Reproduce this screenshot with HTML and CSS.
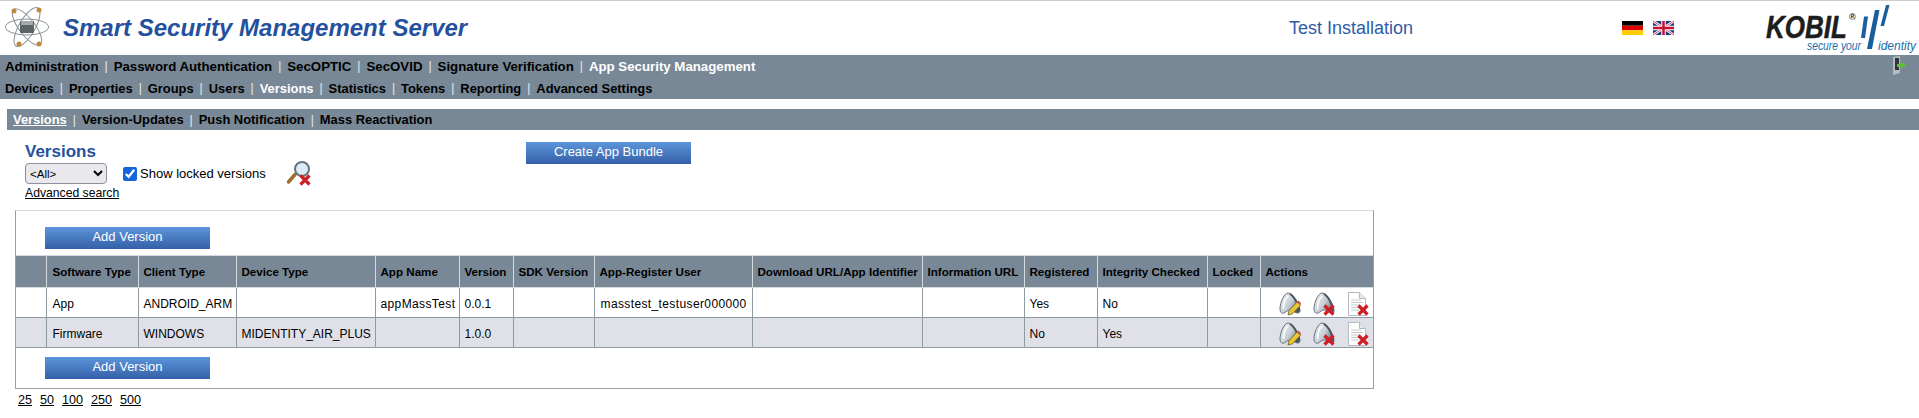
FILE: index.html
```html
<!DOCTYPE html>
<html lang="en">
<head>
    <meta charset="UTF-8">
    <meta name="viewport" content="width=device-width, initial-scale=1.0">
    <title>Smart Security Management Server</title>
    <link rel="stylesheet" href="styles.css">
</head>
<body>

    <svg class="defs" width="0" height="0">
        <defs>
            <linearGradient id="bell" x1="0" y1="0" x2="1" y2="0.6">
                <stop offset="0" stop-color="#f4f6f7"/>
                <stop offset="0.6" stop-color="#c6ced5"/>
                <stop offset="0.85" stop-color="#8d98a2"/>
                <stop offset="1" stop-color="#4a5560"/>
            </linearGradient>
            <symbol id="bellShape" viewBox="0 0 22 24">
                <path d="M9 1C5.500 1 1 10 1 17c0 3.500 2.500 5.500 5 3.500C9 18 12 17 15 19.500c2 1.800 6 2.500 6-1C21 13 14 1 9 1z" fill="url(#bell)" stroke="#66717b" stroke-width="1"/>
                <path d="M4.500 17C4.500 11 7 6 9.500 4" fill="none" stroke="#fff" stroke-width="1.500"/>
                <path d="M11 1.800C15 4 19.800 13 20.300 18.500" fill="none" stroke="#4b5660" stroke-width="2"/>
            </symbol>
            <symbol id="redX" viewBox="0 0 12 12">
                <path d="M1.500 1.500l9 9M10.500 1.500l-9 9" stroke="#cf1f26" stroke-width="3.200" fill="none"/>
            </symbol>
            <symbol id="editIcon" viewBox="0 0 22 24">
                <use href="#bellShape" width="22" height="24"/>
                <path d="M9 23l1-4.500 8-8.500 3.500 3.300-8 8.500z" fill="#e8c534" stroke="#6b5a1a" stroke-width=".8"/>
                <path d="M18 10l1.500-1.500 2.500 2.500-.5 2.300z" fill="#d3574a"/>
            </symbol>
            <symbol id="removeIcon" viewBox="0 0 22 24">
                <use href="#bellShape" width="22" height="24"/>
                <use href="#redX" x="10" y="12" width="12" height="12"/>
            </symbol>
            <symbol id="docIcon" viewBox="0 0 21 24">
                <path d="M.5.500h11l6 6v17H.5z" fill="#fff" stroke="#b5bac0"/>
                <path d="M11.500.500v6h6" fill="#e6e9ec" stroke="#b5bac0"/>
                <path d="M3 8h10M3 10.500h12M3 13h9M3 15.500h8M3 18h8" stroke="#c4c8cc"/>
                <use href="#redX" x="9" y="12" width="12" height="12"/>
            </symbol>
        </defs>
    </svg>

    <div class="header">
        <svg class="logo" width="46" height="44" viewBox="0 0 46 44">
            <g fill="none" stroke="#8b9296" stroke-width="1">
                <ellipse cx="22" cy="22" rx="21.500" ry="8"/>
                <ellipse cx="22" cy="22" rx="22" ry="8" transform="rotate(53 22 22)"/>
                <ellipse cx="22" cy="22" rx="22" ry="8" transform="rotate(-60 22 22)"/>
            </g>
            <rect x="15" y="16" width="14" height="12" rx="1" fill="#5d6468"/>
            <rect x="16" y="16" width="12" height="4" fill="#a2a9ad"/>
            <circle cx="9" cy="6" r="2.500" fill="#c08a3e"/>
            <circle cx="34" cy="5" r="2.500" fill="#c08a3e"/>
            <circle cx="14" cy="39" r="2.500" fill="#c08a3e"/>
            <circle cx="34" cy="39" r="2.500" fill="#c08a3e"/>
        </svg>
        <div class="app-title">Smart Security Management Server</div>
        <div class="install-name">Test Installation</div>
        <div class="flags">
            <svg width="21" height="14" viewBox="0 0 21 14">
                <rect width="21" height="4.700" fill="#000"/>
                <rect y="4.700" width="21" height="4.600" fill="#d00"/>
                <rect y="9.300" width="21" height="4.700" fill="#fc0"/>
            </svg>
            <svg width="21" height="14" viewBox="0 0 21 14">
                <rect width="21" height="14" fill="#1f3a80"/>
                <path d="M0 0l21 14M21 0L0 14" stroke="#fff" stroke-width="2.600"/>
                <path d="M0 0l21 14M21 0L0 14" stroke="#c8102e" stroke-width=".8"/>
                <path d="M10.500 0v14M0 7h21" stroke="#fff" stroke-width="4.500"/>
                <path d="M10.500 0v14M0 7h21" stroke="#c8102e" stroke-width="2.500"/>
            </svg>
        </div>
        <svg class="kobil" width="153" height="54" viewBox="0 0 153 54">
            <text class="kobil-name" transform="translate(0 37) scale(1 1.23)">KOBIL</text>
            <text class="kobil-reg" x="83" y="19">®</text>
            <path d="M98 15.500h4L99 37h-4zM109 9h4.500L106 48h-5zM120 4h3.500L118 25h-3.500z" fill="#1a5e9e"/>
            <text class="kobil-tag" x="41" y="49" textLength="54" lengthAdjust="spacingAndGlyphs">secure your</text>
            <text class="kobil-tag" x="112" y="49" textLength="38" lengthAdjust="spacingAndGlyphs">identity</text>
        </svg>
    </div>

    <div class="main-nav">
        <div class="nav-row first">
            <a class="nav-link">Administration</a><span class="sep">|</span>
            <a class="nav-link">Password Authentication</a><span class="sep">|</span>
            <a class="nav-link">SecOPTIC</a><span class="sep">|</span>
            <a class="nav-link">SecOVID</a><span class="sep">|</span>
            <a class="nav-link">Signature Verification</a><span class="sep">|</span>
            <a class="nav-link active">App Security Management</a>
        </div>
        <div class="nav-row">
            <a class="nav-link">Devices</a><span class="sep">|</span>
            <a class="nav-link">Properties</a><span class="sep">|</span>
            <a class="nav-link">Groups</a><span class="sep">|</span>
            <a class="nav-link">Users</a><span class="sep">|</span>
            <a class="nav-link active">Versions</a><span class="sep">|</span>
            <a class="nav-link">Statistics</a><span class="sep">|</span>
            <a class="nav-link">Tokens</a><span class="sep">|</span>
            <a class="nav-link">Reporting</a><span class="sep">|</span>
            <a class="nav-link">Advanced Settings</a>
        </div>
        <svg class="exit-icon" width="15" height="19" viewBox="0 0 15 19">
            <path d="M1 1l7-1v17l-7 2z" fill="#b4bcc2"/>
            <path d="M3 2h4v12H3z" fill="#2e363c"/>
            <path d="M5 8h4V5l5 4-5 4v-2H5z" fill="#5fbf3a"/>
        </svg>
    </div>

    <div class="sub-nav">
        <a class="nav-link current">Versions</a><span class="sep">|</span>
        <a class="nav-link">Version-Updates</a><span class="sep">|</span>
        <a class="nav-link">Push Notification</a><span class="sep">|</span>
        <a class="nav-link">Mass Reactivation</a>
    </div>

    <div class="filters">
        <div class="filter-left">
            <div class="page-title">Versions</div>
            <div class="filter-row">
                <select class="type-select"><option>&lt;All&gt;</option></select>
                <label class="locked-label"><input type="checkbox" checked>Show locked versions</label>
                <svg class="search-icon" width="26" height="25" viewBox="0 0 26 25">
                    <path d="M9 13.500L2.500 21" stroke="#a06c2c" stroke-width="3.500" stroke-linecap="round"/>
                    <circle cx="16" cy="8" r="7" fill="#dcecf6" stroke="#66727c" stroke-width="2"/>
                    <use href="#redX" x="13" y="13" width="12" height="12"/>
                </svg>
            </div>
            <a class="plain-link search-link">Advanced search</a>
        </div>
        <button class="blue-btn bundle-btn">Create App Bundle</button>
    </div>

    <div class="table-box">
        <div class="btn-row top"><button class="blue-btn">Add Version</button></div>
        <table class="versions">
            <colgroup>
                <col class="c0"><col class="c1"><col class="c2"><col class="c3"><col class="c4"><col class="c5"><col class="c6"><col class="c7"><col class="c8"><col class="c9"><col class="c10"><col class="c11"><col class="c12"><col class="c13">
            </colgroup>
            <thead>
                <tr>
                    <th></th>
                    <th class="lead">Software Type</th>
                    <th>Client Type</th>
                    <th>Device Type</th>
                    <th>App Name</th>
                    <th>Version</th>
                    <th>SDK Version</th>
                    <th>App-Register User</th>
                    <th>Download URL/App Identifier</th>
                    <th>Information URL</th>
                    <th>Registered</th>
                    <th>Integrity Checked</th>
                    <th>Locked</th>
                    <th>Actions</th>
                </tr>
            </thead>
            <tbody>
                <tr>
                    <td></td>
                    <td class="lead">App</td>
                    <td>ANDROID_ARM</td>
                    <td></td>
                    <td class="wide">appMassTest</td>
                    <td>0.0.1</td>
                    <td></td>
                    <td class="wide lead">masstest_testuser000000</td>
                    <td></td>
                    <td></td>
                    <td>Yes</td>
                    <td>No</td>
                    <td></td>
                    <td class="actions">
                        <div class="action-icons">
                            <svg width="22" height="24"><use href="#editIcon"/></svg>
                            <svg width="22" height="24"><use href="#removeIcon"/></svg>
                            <svg class="doc" width="21" height="24"><use href="#docIcon"/></svg>
                        </div>
                    </td>
                </tr>
                <tr class="alt">
                    <td></td>
                    <td class="lead">Firmware</td>
                    <td>WINDOWS</td>
                    <td>MIDENTITY_AIR_PLUS</td>
                    <td></td>
                    <td>1.0.0</td>
                    <td></td>
                    <td></td>
                    <td></td>
                    <td></td>
                    <td>No</td>
                    <td>Yes</td>
                    <td></td>
                    <td class="actions">
                        <div class="action-icons">
                            <svg width="22" height="24"><use href="#editIcon"/></svg>
                            <svg width="22" height="24"><use href="#removeIcon"/></svg>
                            <svg class="doc" width="21" height="24"><use href="#docIcon"/></svg>
                        </div>
                    </td>
                </tr>
            </tbody>
        </table>
        <div class="btn-row bottom"><button class="blue-btn">Add Version</button></div>
    </div>

    <div class="pager">
        <a class="plain-link">25</a>
        <a class="plain-link">50</a>
        <a class="plain-link">100</a>
        <a class="plain-link">250</a>
        <a class="plain-link">500</a>
    </div>

</body>
</html>
```

FILE: styles.css
```css
* { margin: 0; padding: 0; box-sizing: border-box; }
body { background: white; color: black; font-family: "Liberation Sans", Arial, sans-serif; font-size: 12px; border-top: 1px solid #cccccc; height: 418px; overflow: hidden; }
.defs { position: absolute; }

.header { height: 54px; display: flex; align-items: center; }
.logo { margin-left: 5px; flex: none; align-self: flex-start; margin-top: 4px; }
.app-title { margin-left: 12px; width: 1226px; font-size: 24px; font-weight: bold; font-style: italic; color: #24509e; margin-top: -1px; }
.install-name { width: 333px; font-size: 18px; color: #2f5ba6; }
.flags { display: flex; gap: 10px; width: 144px; }
.kobil { flex: none; align-self: flex-start; }
.kobil-name { font-family: "Liberation Sans", Arial, sans-serif; font-size: 26px; font-weight: bold; font-style: italic; fill: #1d1d1d; stroke: #1d1d1d; stroke-width: .4px; }
.kobil-reg { font-family: "Liberation Sans", Arial, sans-serif; font-size: 9px; font-weight: bold; fill: #1d1d1d; }
.kobil-tag { font-family: "Liberation Sans", Arial, sans-serif; font-size: 12px; font-style: italic; fill: #1a6ea8; }

.main-nav { height: 44px; background: #788896; padding: 0 5px; position: relative; }
.nav-row { height: 22px; display: flex; align-items: center; }
.nav-link { font-size: 12.9px; font-weight: bold; color: black; }
.nav-row.first .nav-link { font-size: 13.25px; }
.nav-link.active { color: white; }
.nav-link.current { color: white; text-decoration: underline; }
.sep { color: #e6e9ec; font-size: 12px; margin: 0 6px; }
.exit-icon { position: absolute; left: 1892px; top: 1px; }

.sub-nav { height: 21px; margin: 10px 0 0 7px; background: #788896; padding-left: 6px; display: flex; align-items: center; }

.filters { display: flex; padding-left: 25px; height: 80px; }
.filter-left { width: 501px; }
.page-title { font-size: 17px; font-weight: bold; color: #24509e; margin-top: 12px; line-height: 19px; }
.filter-row { display: flex; align-items: center; height: 25px; }
.type-select { width: 82px; height: 21px; font-family: "Liberation Sans", Arial, sans-serif; font-size: 11.5px; background: #e9e9ed; border: 1px solid #8f8f9d; border-radius: 4px; }
.locked-label { display: flex; align-items: center; font-size: 13px; margin-left: 16px; }
.locked-label input { width: 14px; height: 14px; margin-right: 3px; accent-color: #1565d8; }
.search-icon { margin-left: 20px; }
.plain-link { color: black; text-decoration: underline; font-size: 12.6px; }
.search-link { font-size: 12.2px; }
.bundle-btn { margin-top: 12px; }

.blue-btn { display: block; width: 165px; height: 22px; border: 0; padding-bottom: 3px; background: linear-gradient(#5c95da, #3560a8); color: white; font-family: "Liberation Sans", Arial, sans-serif; font-size: 13px; }

.table-box { margin-left: 15px; width: 1359px; height: 179px; border: 1px solid #999fa5; border-top-color: #d5dadf; border-right-color: #999fa5; }
.btn-row { padding-left: 29px; }
.btn-row.top { padding-top: 16px; height: 44px; }
.btn-row.bottom { padding-top: 9px; }

.versions { border-collapse: collapse; table-layout: fixed; width: 1357px; }
.c0 { width: 30px; } .c1 { width: 92px; } .c2 { width: 98px; } .c3 { width: 139px; } .c4 { width: 84px; }
.c5 { width: 54px; } .c6 { width: 81px; } .c7 { width: 158px; } .c8 { width: 170px; } .c9 { width: 102px; }
.c10 { width: 73px; } .c11 { width: 110px; } .c12 { width: 53px; } .c13 { width: 113px; }
.versions th { height: 32px; background: #788896; border: 1px solid #d5dadf; font-size: 11.6px; text-align: left; padding-left: 5px; white-space: nowrap; overflow: hidden; }
.versions td { height: 30px; border: 1px solid #8d99a3; font-size: 12px; padding: 2px 0 0 5px; white-space: nowrap; }
.versions th.lead, .versions td.lead { padding-left: 6px; }
.versions td.wide { letter-spacing: .38px; }
.versions th:first-child, .versions td:first-child { border-left: 0; }
.versions th:last-child, .versions td:last-child { border-right: 0; }
.versions .alt td { background: #dfe0e8; }
.versions td.actions { padding: 3px 0 0 18px; }
.action-icons { display: flex; gap: 12px; }
.action-icons .doc { margin-left: 1px; }

.pager { display: flex; gap: 8px; margin: 4px 0 0 18px; }
```
